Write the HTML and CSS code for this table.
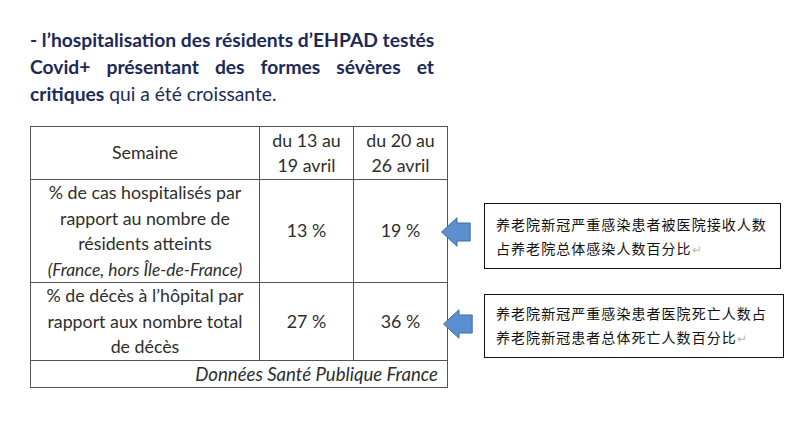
FILE: index.html
```html
<!DOCTYPE html>
<html lang="fr">
<head>
<meta charset="utf-8">
<link rel="stylesheet" href="styles.css">
</head>
<body>
<div class="page">
  <p class="intro"><span class="ln just"><b>- l’hospitalisation des résidents d’EHPAD testés</b></span><span class="ln just"><b>Covid+ présentant des formes sévères et</b></span><span class="ln"><b>critiques</b> qui a été croissante.</span></p>
  <div class="main">
    <table class="data">
      <colgroup><col class="c1"><col class="c2"><col class="c3"></colgroup>
      <tr class="r-head">
        <td>Semaine</td>
        <td>du 13 au<br>19 avril</td>
        <td>du 20 au<br>26 avril</td>
      </tr>
      <tr class="r-hosp">
        <td>% de cas hospitalisés par<br>rapport au nombre de<br>résidents atteints<br><i class="note">(France, hors Île-de-France)</i></td>
        <td>13 %</td>
        <td>19 %</td>
      </tr>
      <tr class="r-deces">
        <td>% de décès à l’hôpital par<br>rapport aux nombre total<br>de décès</td>
        <td>27 %</td>
        <td>36 %</td>
      </tr>
      <tr class="r-foot">
        <td colspan="3"><i>Données Santé Publique France</i></td>
      </tr>
    </table>
    <div class="notes">
      <div class="callout c-one">
        <svg class="arrow" width="30" height="30" viewBox="0 0 30 30"><path d="M0.5 15 L16 0.8 L16 6 L29.2 6 L29.2 24 L16 24 L16 29.2 Z" fill="#5b8fd0" stroke="#41719c" stroke-width="1"/></svg>
        <p>养老院新冠严重感染患者被医院接收人数<br>占养老院总体感染人数百分比<span class="ret">↵</span></p>
      </div>
      <div class="callout c-two">
        <svg class="arrow" width="30" height="30" viewBox="0 0 30 30"><path d="M0.5 15 L16 0.8 L16 6 L29.2 6 L29.2 24 L16 24 L16 29.2 Z" fill="#5b8fd0" stroke="#41719c" stroke-width="1"/></svg>
        <p>养老院新冠严重感染患者医院死亡人数占<br>养老院新冠患者总体死亡人数百分比<span class="ret">↵</span></p>
      </div>
    </div>
  </div>
</div>
</body>
</html>
```
FILE: styles.css
```css
html, body {
  margin: 0;
  padding: 0;
  background: #ffffff;
}
.page {
  padding: 26px 0 0 30px;
  width: 782px;
  height: 406px;
  overflow: hidden;
}
.intro {
  margin: 0;
  width: 404px;
  font-family: Lato, "Open Sans", sans-serif;
  font-size: 19.25px;
  line-height: 27px;
  color: #1c2a58;
}
.intro .ln {
  display: block;
  white-space: nowrap;
  text-align: left;
}
.intro .just {
  text-align: justify;
  text-align-last: justify;
}
.intro b {
  font-weight: 700;
}
.main {
  display: flex;
  margin-top: 19px;
}
.data {
  border-collapse: collapse;
  table-layout: fixed;
  width: 417px;
  font-family: Lato, "Liberation Sans", sans-serif;
  font-size: 17.8px;
  line-height: 25.5px;
  color: #2e2e2e;
}
.data col.c1 { width: 229px; }
.data col.c2 { width: 94px; }
.data col.c3 { width: 94px; }
.data td {
  border: 1px solid #555555;
  text-align: center;
  vertical-align: middle;
  padding: 0;
}
.r-head td { height: 52px; }
.r-hosp td { height: 101px; }
.r-deces td { height: 76px; }
.r-foot td {
  height: 26px;
  text-align: right;
  padding-right: 9px;
  line-height: 24px;
  font-size: 18.6px;
}
.note {
  font-size: 17.4px;
}
.notes {
  display: flex;
  flex-direction: column;
  padding-left: 36px;
}
.callout {
  position: relative;
  border: 1px solid #111111;
  box-sizing: border-box;
}
.callout p {
  margin: 0;
  padding: 8px 0 0 11px;
  font-family: "Noto Sans CJK SC", sans-serif;
  font-size: 14px;
  line-height: 24px;
  letter-spacing: 1.05px;
  color: #111111;
  white-space: nowrap;
}
.c-one {
  margin-top: 77px;
  width: 297px;
  height: 66px;
}
.c-two {
  margin-top: 25px;
  width: 300px;
  height: 64px;
}
.c-two p { padding-top: 6px; }
.arrow {
  position: absolute;
  left: -44px;
  top: 13px;
}
.c-two .arrow {
  left: -42px;
  top: 14px;
}
.ret {
  color: #b8b8b8;
  font-size: 12px;
}
```
